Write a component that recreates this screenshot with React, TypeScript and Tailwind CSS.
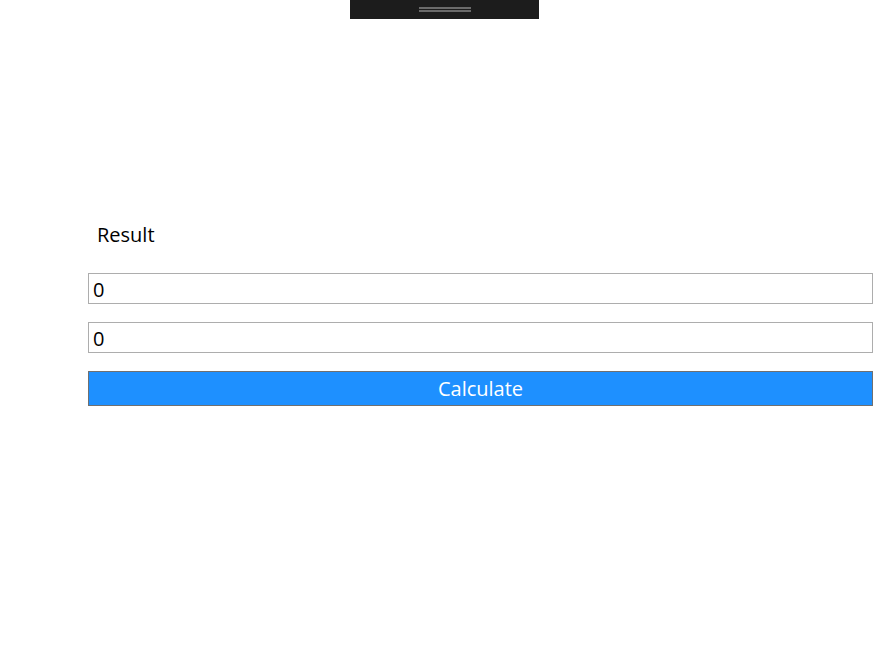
import React from "react";

export default function App() {
  return (
    <div className="w-[890px] h-[651px] bg-white flex flex-col" style={{ fontFamily: '"Open Sans", "Noto Sans", sans-serif' }}>
      <div className="ml-[350px] w-[189px] h-[19px] bg-[#1c1c1c] flex flex-col items-center pt-[7px] gap-[1px] shrink-0">
        <div className="w-[52px] h-[2px] bg-[#6a6a6a]" />
        <div className="w-[52px] h-[2px] bg-[#6a6a6a]" />
      </div>
      <div className="ml-[88px] mr-[17px] mt-[201px] flex flex-col">
        <div className="pl-[9px] pt-[1px] h-[28px] text-[20px] leading-[28px] text-black">Result</div>
        <input
          readOnly
          value="0"
          className="mt-[25px] h-[31px] w-full border border-[#adadad] px-[4px] pt-[1px] text-[20px] leading-[28px] text-black outline-none"
        />
        <input
          readOnly
          value="0"
          className="mt-[18px] h-[31px] w-full border border-[#adadad] px-[4px] pt-[1px] text-[20px] leading-[28px] text-black outline-none"
        />
        <button className="mt-[18px] h-[35px] w-full border border-[#707070] bg-[#1e90ff] pt-[1px] text-white text-[20px] leading-[30px]">
          Calculate
        </button>
      </div>
    </div>
  );
}
